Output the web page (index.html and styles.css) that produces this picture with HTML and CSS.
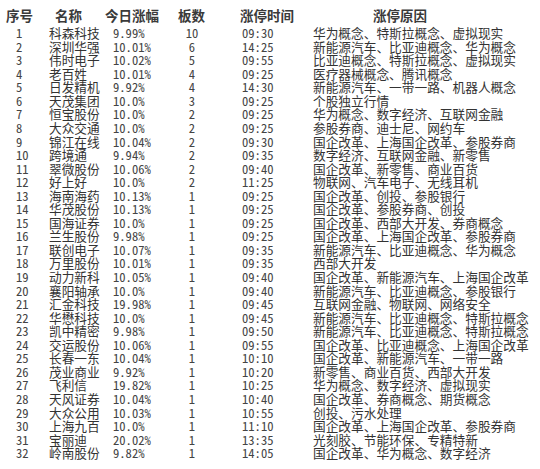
FILE: index.html
```html
<!DOCTYPE html>
<html lang="zh-CN">
<head>
<meta charset="utf-8">
<title>涨停</title>
<link rel="stylesheet" href="styles.css">
</head>
<body>
<div class="table">
  <div class="row head">
    <span class="h1">序号</span><span class="h2">名称</span><span class="h3">今日涨幅</span><span class="h4">板数</span><span class="h5">涨停时间</span><span class="h6">涨停原因</span>
  </div>
  <div class="row"><span class="c1 num">1</span><span class="c2">科森科技</span><span class="c3 num">9.99%</span><span class="c4 num">10</span><span class="c5 num">09:30</span><span class="c6">华为概念、特斯拉概念、虚拟现实</span></div>
  <div class="row"><span class="c1 num">2</span><span class="c2">深圳华强</span><span class="c3 num">10.01%</span><span class="c4 num">6</span><span class="c5 num">14:25</span><span class="c6">新能源汽车、比亚迪概念、华为概念</span></div>
  <div class="row"><span class="c1 num">3</span><span class="c2">伟时电子</span><span class="c3 num">10.02%</span><span class="c4 num">5</span><span class="c5 num">09:55</span><span class="c6">比亚迪概念、特斯拉概念、虚拟现实</span></div>
  <div class="row"><span class="c1 num">4</span><span class="c2">老百姓</span><span class="c3 num">10.01%</span><span class="c4 num">4</span><span class="c5 num">09:25</span><span class="c6">医疗器械概念、腾讯概念</span></div>
  <div class="row"><span class="c1 num">5</span><span class="c2">日发精机</span><span class="c3 num">9.92%</span><span class="c4 num">4</span><span class="c5 num">14:30</span><span class="c6">新能源汽车、一带一路、机器人概念</span></div>
  <div class="row"><span class="c1 num">6</span><span class="c2">天茂集团</span><span class="c3 num">10.0%</span><span class="c4 num">3</span><span class="c5 num">09:25</span><span class="c6">个股独立行情</span></div>
  <div class="row"><span class="c1 num">7</span><span class="c2">恒宝股份</span><span class="c3 num">10.0%</span><span class="c4 num">2</span><span class="c5 num">09:25</span><span class="c6">华为概念、数字经济、互联网金融</span></div>
  <div class="row"><span class="c1 num">8</span><span class="c2">大众交通</span><span class="c3 num">10.0%</span><span class="c4 num">2</span><span class="c5 num">09:25</span><span class="c6">参股券商、迪士尼、网约车</span></div>
  <div class="row"><span class="c1 num">9</span><span class="c2">锦江在线</span><span class="c3 num">10.04%</span><span class="c4 num">2</span><span class="c5 num">09:30</span><span class="c6">国企改革、上海国企改革、参股券商</span></div>
  <div class="row"><span class="c1 num">10</span><span class="c2">跨境通</span><span class="c3 num">9.94%</span><span class="c4 num">2</span><span class="c5 num">09:35</span><span class="c6">数字经济、互联网金融、新零售</span></div>
  <div class="row"><span class="c1 num">11</span><span class="c2">翠微股份</span><span class="c3 num">10.06%</span><span class="c4 num">2</span><span class="c5 num">09:40</span><span class="c6">国企改革、新零售、商业百货</span></div>
  <div class="row"><span class="c1 num">12</span><span class="c2">好上好</span><span class="c3 num">10.0%</span><span class="c4 num">2</span><span class="c5 num">11:25</span><span class="c6">物联网、汽车电子、无线耳机</span></div>
  <div class="row"><span class="c1 num">13</span><span class="c2">海南海药</span><span class="c3 num">10.13%</span><span class="c4 num">1</span><span class="c5 num">09:25</span><span class="c6">国企改革、创投、参股银行</span></div>
  <div class="row"><span class="c1 num">14</span><span class="c2">华茂股份</span><span class="c3 num">10.13%</span><span class="c4 num">1</span><span class="c5 num">09:25</span><span class="c6">国企改革、参股券商、创投</span></div>
  <div class="row"><span class="c1 num">15</span><span class="c2">国海证券</span><span class="c3 num">10.0%</span><span class="c4 num">1</span><span class="c5 num">09:25</span><span class="c6">国企改革、西部大开发、券商概念</span></div>
  <div class="row"><span class="c1 num">16</span><span class="c2">兰生股份</span><span class="c3 num">9.98%</span><span class="c4 num">1</span><span class="c5 num">09:25</span><span class="c6">国企改革、上海国企改革、参股券商</span></div>
  <div class="row"><span class="c1 num">17</span><span class="c2">联创电子</span><span class="c3 num">10.07%</span><span class="c4 num">1</span><span class="c5 num">09:35</span><span class="c6">新能源汽车、比亚迪概念、华为概念</span></div>
  <div class="row"><span class="c1 num">18</span><span class="c2">万里股份</span><span class="c3 num">10.01%</span><span class="c4 num">1</span><span class="c5 num">09:35</span><span class="c6">西部大开发</span></div>
  <div class="row"><span class="c1 num">19</span><span class="c2">动力新科</span><span class="c3 num">10.05%</span><span class="c4 num">1</span><span class="c5 num">09:40</span><span class="c6">国企改革、新能源汽车、上海国企改革</span></div>
  <div class="row"><span class="c1 num">20</span><span class="c2">襄阳轴承</span><span class="c3 num">10.0%</span><span class="c4 num">1</span><span class="c5 num">09:40</span><span class="c6">新能源汽车、比亚迪概念、参股银行</span></div>
  <div class="row"><span class="c1 num">21</span><span class="c2">汇金科技</span><span class="c3 num">19.98%</span><span class="c4 num">1</span><span class="c5 num">09:45</span><span class="c6">互联网金融、物联网、网络安全</span></div>
  <div class="row"><span class="c1 num">22</span><span class="c2">华懋科技</span><span class="c3 num">10.0%</span><span class="c4 num">1</span><span class="c5 num">09:45</span><span class="c6">新能源汽车、比亚迪概念、特斯拉概念</span></div>
  <div class="row"><span class="c1 num">23</span><span class="c2">凯中精密</span><span class="c3 num">9.98%</span><span class="c4 num">1</span><span class="c5 num">09:50</span><span class="c6">新能源汽车、比亚迪概念、特斯拉概念</span></div>
  <div class="row"><span class="c1 num">24</span><span class="c2">交运股份</span><span class="c3 num">10.06%</span><span class="c4 num">1</span><span class="c5 num">09:55</span><span class="c6">国企改革、比亚迪概念、上海国企改革</span></div>
  <div class="row"><span class="c1 num">25</span><span class="c2">长春一东</span><span class="c3 num">10.04%</span><span class="c4 num">1</span><span class="c5 num">10:10</span><span class="c6">国企改革、新能源汽车、一带一路</span></div>
  <div class="row"><span class="c1 num">26</span><span class="c2">茂业商业</span><span class="c3 num">9.92%</span><span class="c4 num">1</span><span class="c5 num">10:20</span><span class="c6">新零售、商业百货、西部大开发</span></div>
  <div class="row"><span class="c1 num">27</span><span class="c2">飞利信</span><span class="c3 num">19.82%</span><span class="c4 num">1</span><span class="c5 num">10:25</span><span class="c6">华为概念、数字经济、虚拟现实</span></div>
  <div class="row"><span class="c1 num">28</span><span class="c2">天风证券</span><span class="c3 num">10.04%</span><span class="c4 num">1</span><span class="c5 num">10:40</span><span class="c6">国企改革、券商概念、期货概念</span></div>
  <div class="row"><span class="c1 num">29</span><span class="c2">大众公用</span><span class="c3 num">10.03%</span><span class="c4 num">1</span><span class="c5 num">10:55</span><span class="c6">创投、污水处理</span></div>
  <div class="row"><span class="c1 num">30</span><span class="c2">上海九百</span><span class="c3 num">10.0%</span><span class="c4 num">1</span><span class="c5 num">11:10</span><span class="c6">国企改革、上海国企改革、参股券商</span></div>
  <div class="row"><span class="c1 num">31</span><span class="c2">宝丽迪</span><span class="c3 num">20.02%</span><span class="c4 num">1</span><span class="c5 num">13:35</span><span class="c6">光刻胶、节能环保、专精特新</span></div>
  <div class="row"><span class="c1 num">32</span><span class="c2">岭南股份</span><span class="c3 num">9.82%</span><span class="c4 num">1</span><span class="c5 num">14:05</span><span class="c6">国企改革、华为概念、数字经济</span></div>
</div>
</body>
</html>
```
FILE: styles.css
```css
html, body {
  margin: 0;
  padding: 0;
  background: #ffffff;
}

body {
  width: 540px;
  height: 469px;
  overflow: hidden;
  font-family: "Noto Sans CJK SC", "Noto Sans", sans-serif;
  color: #333333;
}

.table {
  display: flex;
  flex-direction: column;
}

.row {
  display: grid;
  grid-template-columns: 45px 60px 70px 34px 96px 1fr;
  font-size: 12.7px;
  line-height: 13.55px;
  white-space: nowrap;
}

.row.head {
  font-size: 13.5px;
  font-weight: bold;
  line-height: 20px;
  padding-top: 5px;
  height: 21.2px;
  color: #3a3a3a;
}

.num {
  font-family: "Noto Sans Mono CJK SC", "DejaVu Sans Mono", monospace;
  font-size: 12.6px;
  color: #444444;
}

.c1 { padding-left: 16px; }
.c2 { padding-left: 4px; }
.c3 { padding-left: 8px; }
.c4 { text-align: center; }
.c5 { padding-left: 33px; }
.c6 { padding-left: 8px; }

.h1 { padding-left: 6px; }
.h2 { padding-left: 10px; }
.h3 { padding-left: 0; }
.h4 { padding-left: 3px; }
.h5 { padding-left: 31px; }
.h6 { padding-left: 68px; }
```
